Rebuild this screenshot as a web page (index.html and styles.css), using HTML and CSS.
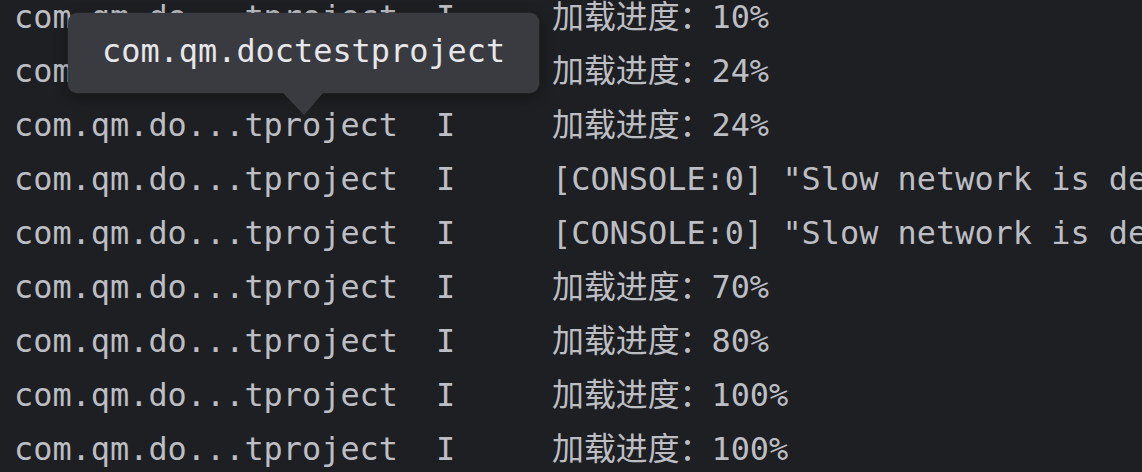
FILE: index.html
```html
<!DOCTYPE html>
<html lang="zh">
<head>
<meta charset="utf-8">
<title>Logcat</title>
<link rel="stylesheet" href="styles.css">
</head>
<body>
<div class="logview">
  <div class="log">
    <div class="row"><span class="pkg">com.qm.do...tproject</span><span class="lvl">I</span><span class="msg">加载进度：10%</span></div>
    <div class="row"><span class="pkg">com.qm.do...tproject</span><span class="lvl">I</span><span class="msg">加载进度：24%</span></div>
    <div class="row"><span class="pkg">com.qm.do...tproject</span><span class="lvl">I</span><span class="msg">加载进度：24%</span></div>
    <div class="row"><span class="pkg">com.qm.do...tproject</span><span class="lvl">I</span><span class="msg">[CONSOLE:0] "Slow network is detected. See https://www.chromestatus.com/feature/5636954674692096 for more details."</span></div>
    <div class="row"><span class="pkg">com.qm.do...tproject</span><span class="lvl">I</span><span class="msg">[CONSOLE:0] "Slow network is detected. See https://www.chromestatus.com/feature/5636954674692096 for more details."</span></div>
    <div class="row"><span class="pkg">com.qm.do...tproject</span><span class="lvl">I</span><span class="msg">加载进度：70%</span></div>
    <div class="row"><span class="pkg">com.qm.do...tproject</span><span class="lvl">I</span><span class="msg">加载进度：80%</span></div>
    <div class="row"><span class="pkg">com.qm.do...tproject</span><span class="lvl">I</span><span class="msg">加载进度：100%</span></div>
    <div class="row"><span class="pkg">com.qm.do...tproject</span><span class="lvl">I</span><span class="msg">加载进度：100%</span></div>
  </div>
  <div class="tooltip"><span class="tip-text">com.qm.doctestproject</span><svg class="tip-arrow" width="40" height="23" viewBox="0 0 40 23"><polygon points="0,0 40,0 21,22" fill="#3a3b40"/></svg></div>
</div>
</body>
</html>
```
FILE: styles.css
```css
html, body {
  margin: 0;
  padding: 0;
  background: #1e1f22;
  overflow: hidden;
}
body {
  width: 1142px;
  height: 472px;
}
.logview {
  position: relative;
  width: 1142px;
  height: 472px;
  overflow: hidden;
  font-family: "DejaVu Sans Mono", "Noto Sans CJK SC", monospace;
  font-size: 31.9px;
  color: #bcbec4;
}
.log {
  margin-top: -10px;
  padding-left: 14px;
}
.row {
  display: grid;
  grid-template-columns: 422px 116px 1fr;
  height: 54px;
  line-height: 54px;
  white-space: pre;
}
.msg {
  overflow: hidden;
}
.tooltip {
  position: absolute;
  left: 68px;
  top: 13px;
  width: 471px;
  height: 80px;
  box-sizing: border-box;
  padding: 0 0 4px 34px;
  line-height: 76px;
  background: #3a3b40;
  border-radius: 9px;
  box-shadow: 0 0 0 1px rgba(255,255,255,0.04), 0 4px 14px rgba(0,0,0,0.35);
  color: #e6e7ea;
  white-space: nowrap;
}
.tip-arrow {
  position: absolute;
  left: 215px;
  top: 80px;
  display: block;
}
```
